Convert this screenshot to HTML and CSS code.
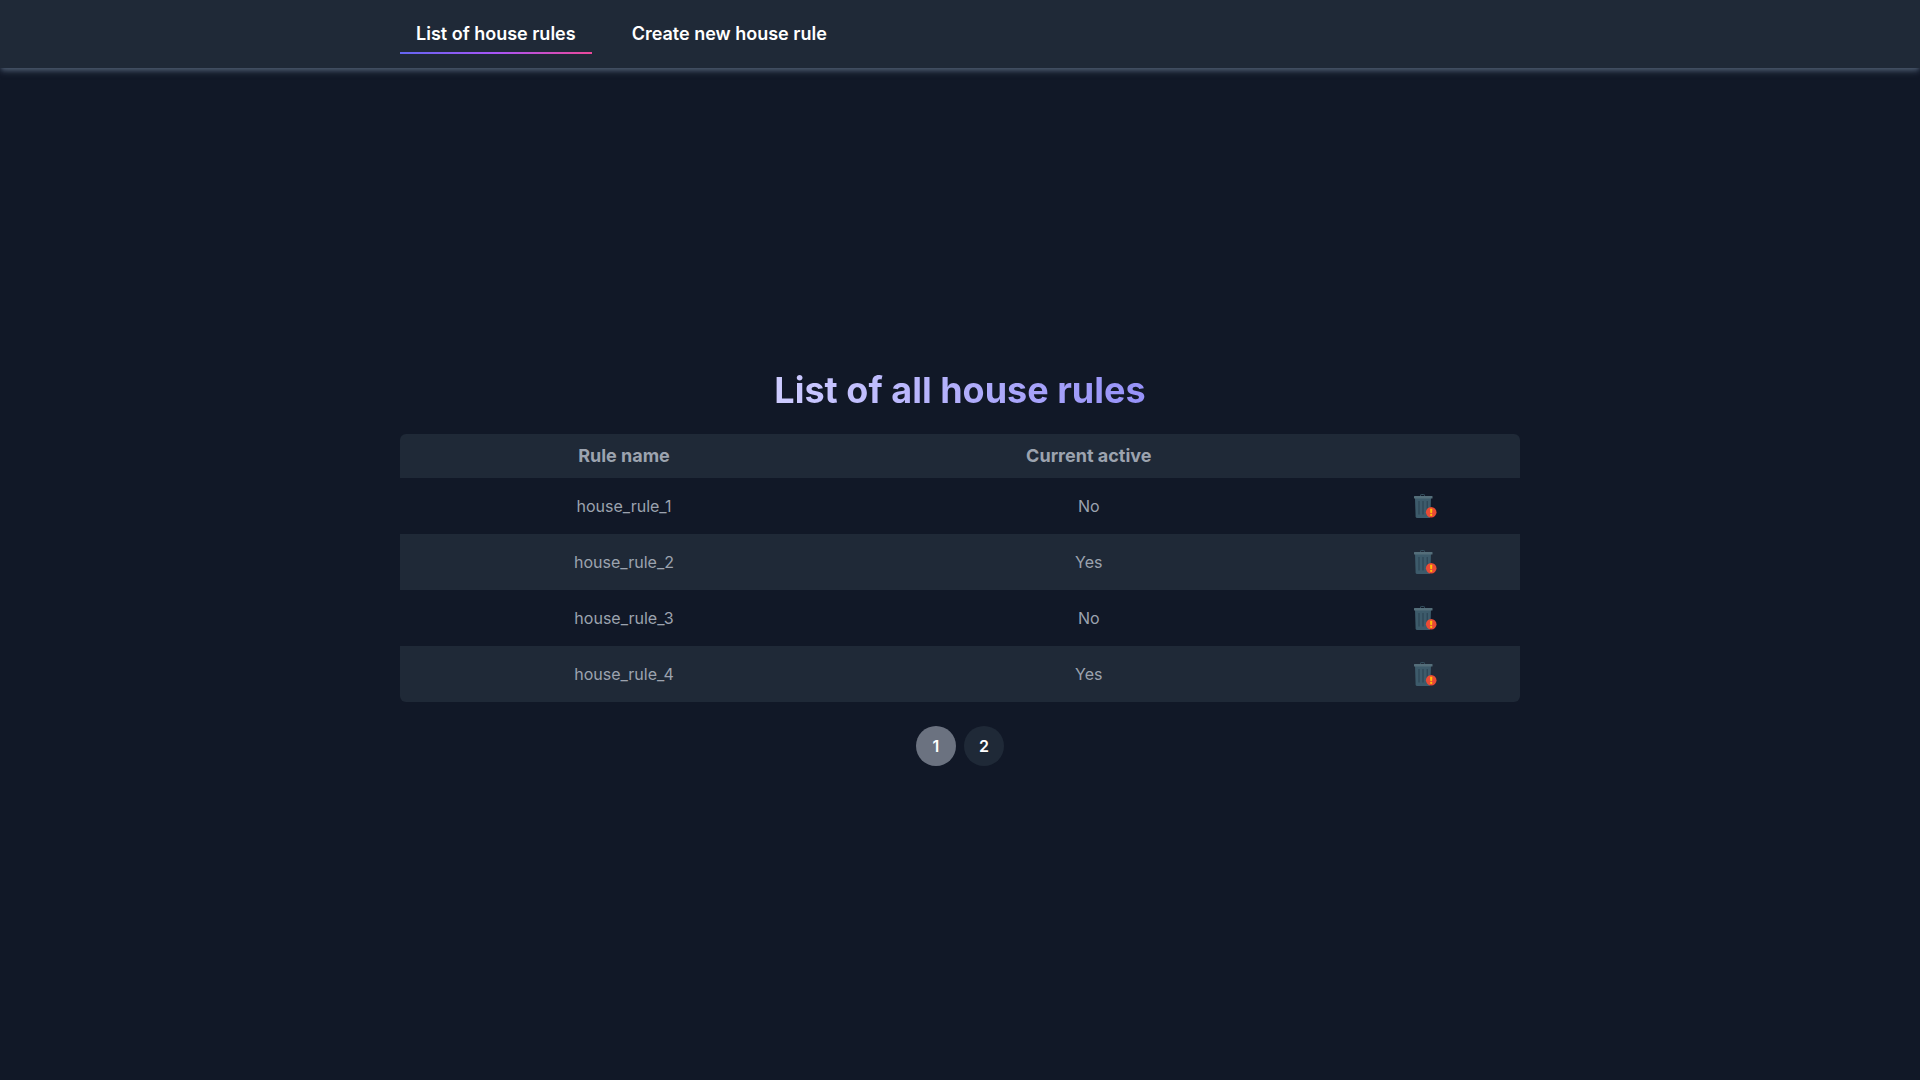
FILE: index.html
```html
<!DOCTYPE html>
<html lang="en">
<head>
  <meta charset="utf-8">
  <meta name="viewport" content="width=device-width, initial-scale=1">
  <title>House rules</title>
  <link rel="stylesheet" href="styles.css">
</head>
<body>
  <svg class="sprite" aria-hidden="true">
    <symbol id="trash" viewBox="0 0 24 24">
      <path d="M7.500 2V1.100Q7.500.500 8.200.500h2.600q.700 0 .700.600V2" fill="none" stroke="#35505f"/>
      <path d="M2 4h16l-.600 18.500q-.100 1.500-1.600 1.500H4.200q-1.500 0-1.600-1.500z" fill="#3d5b6b"/>
      <path d="M6 7v13.500M10 7v13.500M14.300 7v13.500" fill="none" stroke="#2f4858" stroke-width="1.400"/>
      <rect x="1" y="2" width="18.500" height="2.500" rx=".6" fill="#546e7a"/>
      <circle cx="18.200" cy="18.300" r="5.300" fill="#ea4b35"/>
      <path d="M17.100 14.700h2.200l-.200 4.200h-1.800z" fill="#ffc107"/>
      <circle cx="18.200" cy="20.900" r="1.100" fill="#ffc107"/>
    </symbol>
  </svg>

  <header class="site-header">
    <nav class="container tabs" aria-label="House rules">
      <a class="tab tab-active" href="#list" aria-current="page">List of house rules</a>
      <a class="tab" href="#create">Create new house rule</a>
    </nav>
  </header>

  <main class="container content">
    <h1 class="title">List of all house rules</h1>
    <table class="rules">
      <colgroup>
        <col class="col-name">
        <col class="col-active">
        <col class="col-action">
      </colgroup>
      <thead>
        <tr><th scope="col">Rule name</th><th scope="col">Current active</th><td></td></tr>
      </thead>
      <tbody>
        <tr>
          <td>house_rule_1</td><td>No</td>
          <td><button class="delete" type="button" aria-label="Delete house_rule_1"><svg class="icon"><use href="#trash"/></svg></button></td>
        </tr>
        <tr>
          <td>house_rule_2</td><td>Yes</td>
          <td><button class="delete" type="button" aria-label="Delete house_rule_2"><svg class="icon"><use href="#trash"/></svg></button></td>
        </tr>
        <tr>
          <td>house_rule_3</td><td>No</td>
          <td><button class="delete" type="button" aria-label="Delete house_rule_3"><svg class="icon"><use href="#trash"/></svg></button></td>
        </tr>
        <tr>
          <td>house_rule_4</td><td>Yes</td>
          <td><button class="delete" type="button" aria-label="Delete house_rule_4"><svg class="icon"><use href="#trash"/></svg></button></td>
        </tr>
      </tbody>
    </table>
    <nav class="pagination" aria-label="Pages">
      <button class="page page-current" type="button" aria-current="page">1</button>
      <button class="page" type="button">2</button>
    </nav>
  </main>
</body>
</html>
```
FILE: styles.css
```css
* {
  box-sizing: border-box;
}

body {
  display: flex;
  flex-direction: column;
  min-height: 100vh;
  margin: 0;
  background: #111827;
  color: #9ca3af;
  font-family: Inter, "Liberation Sans", sans-serif;
  font-size: 16px;
  line-height: 24px;
}

.sprite {
  display: none;
}

.container {
  width: 100%;
  max-width: 1152px;
  margin: 0 auto;
  padding: 0 16px;
}

.site-header {
  padding: 14px 0;
  background: #1f2937;
  box-shadow: 0 4px 6px -1px #475569, 0 2px 4px -2px #475569;
}

.tabs {
  display: flex;
  gap: 24px;
}

.tab {
  padding: 6px 16px 4px;
  border-bottom: 2px solid transparent;
  color: #fff;
  font-size: 18px;
  font-weight: 600;
  line-height: 28px;
  text-decoration: none;
}

.tab-active {
  border-image: linear-gradient(to right, #6366f1, #a855f7, #ec4899) 1;
}

.content {
  display: flex;
  flex: 1;
  flex-direction: column;
  align-items: center;
  justify-content: center;
  gap: 24px;
  padding-bottom: 12px;
}

.title {
  margin: 0;
  background: linear-gradient(to right, #ceccff, #9691f8);
  background-clip: text;
  color: transparent;
  font-size: 36px;
  font-weight: 700;
  line-height: 40px;
}

.rules {
  width: 100%;
  border-collapse: collapse;
  border-radius: 6px;
  overflow: hidden;
  table-layout: fixed;
  text-align: center;
}

.col-name {
  width: 40%;
}

.col-active {
  width: 43%;
}

.col-action {
  width: 17%;
}

.rules th {
  padding: 8px;
  font-size: 18px;
  font-weight: 700;
  line-height: 28px;
}

.rules td {
  padding: 16px 8px;
}

.rules thead td {
  padding: 0;
}

.rules thead,
.rules tbody tr:nth-child(even) {
  background: #1f2937;
}

.delete {
  display: block;
  margin: 0 auto;
  padding: 0;
  border: 0;
  background: none;
  cursor: pointer;
}

.icon {
  display: block;
  width: 24px;
  height: 24px;
}

.pagination {
  display: flex;
  gap: 8px;
}

.page {
  width: 40px;
  height: 40px;
  padding: 0;
  border: 0;
  border-radius: 50%;
  background: #1f2937;
  color: #fff;
  font: inherit;
  font-weight: 600;
  cursor: pointer;
}

.page-current {
  background: #6b7280;
}
```
